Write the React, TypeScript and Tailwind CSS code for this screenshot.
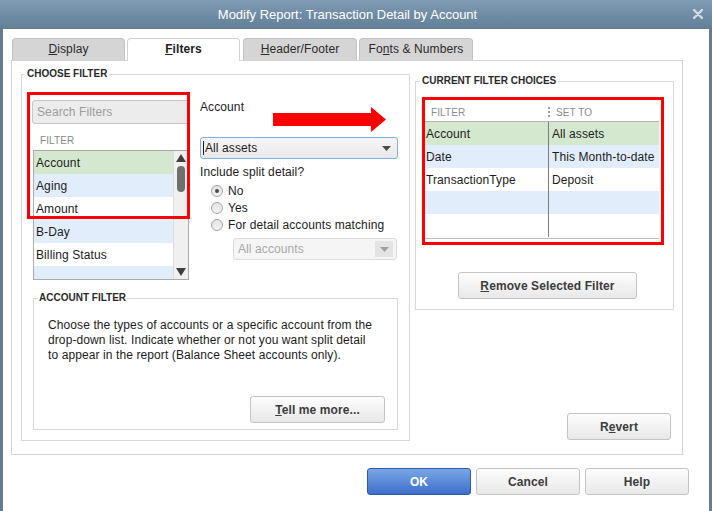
import React from 'react';

const filterRows = [
  { name: 'Account', bg: 'bg-[#d4e8d0]' },
  { name: 'Aging', bg: 'bg-[#e2edfb]' },
  { name: 'Amount', bg: 'bg-white' },
  { name: 'B-Day', bg: 'bg-[#e2edfb]' },
  { name: 'Billing Status', bg: 'bg-white' },
  { name: '', bg: 'bg-[#e2edfb]' },
];

const choiceRows = [
  { filter: 'Account', setTo: 'All assets', bg: 'bg-[#d4e8d0]' },
  { filter: 'Date', setTo: 'This Month-to-date', bg: 'bg-[#e2edfb]' },
  { filter: 'TransactionType', setTo: 'Deposit', bg: 'bg-white' },
  { filter: '', setTo: '', bg: 'bg-[#e2edfb]' },
  { filter: '', setTo: '', bg: 'bg-white' },
];

function Btn({ children, className = '' }: { children: React.ReactNode; className?: string }) {
  return (
    <button
      className={`flex items-center justify-center rounded-[3px] border border-[#c4c4c4] bg-linear-to-b from-[#fdfdfd] to-[#e8e8e8] text-[12px] font-bold text-[#3c3c3c] ${className}`}
    >
      {children}
    </button>
  );
}

function Radio({ checked, label }: { checked?: boolean; label: string }) {
  return (
    <div className="flex h-[17px] items-center pl-[11px]">
      <span className="flex h-[12px] w-[12px] items-center justify-center rounded-full border border-[#a3a3a3] bg-linear-to-b from-[#e4e4e4] to-[#f4f4f4]">
        {checked && <span className="h-[4px] w-[4px] rounded-full bg-[#4a4a4a]" />}
      </span>
      <span className="ml-[5px] text-[12px] text-[#1c1c1c]">{label}</span>
    </div>
  );
}

function Caret({ color }: { color: string }) {
  return (
    <svg width="9" height="5" viewBox="0 0 9 5">
      <polygon points="0,0 9,0 4.5,5" fill={color} />
    </svg>
  );
}

export default function App() {
  return (
    <div className="relative h-[511px] w-[712px] overflow-hidden bg-white font-[Liberation_Sans,Arial,sans-serif] text-[12px] tracking-[0.1px] text-[#1c1c1c]">
      {/* title bar */}
      <div className="relative flex h-[29px] items-center justify-center bg-linear-to-b from-[#7f9bb3] to-[#627f98] pr-[17px]">
        <span className="text-[13px] tracking-normal text-white">Modify Report: Transaction Detail by Account</span>
        <svg className="absolute right-[9px] top-[9px]" width="10" height="10" viewBox="0 0 10 10">
          <path d="M1 1 L9 9 M9 1 L1 9" stroke="#d2dce5" strokeWidth="2.4" strokeLinecap="round" />
        </svg>
      </div>

      <div className="flex h-[482px]">
        <div className="w-[3px] bg-[#627c91]" />

        <div className="flex w-[706px] flex-col pl-[8px]">
          {/* tabs */}
          <div className="ml-[1px] mt-[9px] flex h-[22px] items-end">
            <div className="flex h-[22px] w-[113px] items-center justify-center rounded-t-[4px] border border-b-0 border-[#c3c3c3] bg-[#d5d5d5] pb-[1px] text-[12px] text-[#2a2a2a]">
              <span><u>D</u>isplay</span>
            </div>
            <div className="relative z-10 mb-[-1px] ml-[2px] flex h-[23px] w-[113px] items-center justify-center rounded-t-[4px] border border-b-0 border-[#d2d2d2] bg-white pb-[2px] text-[12px] font-bold text-[#1c1c1c]">
              <span><u>F</u>ilters</span>
            </div>
            <div className="ml-[3px] flex h-[22px] w-[114px] items-center justify-center rounded-t-[4px] border border-b-0 border-[#c3c3c3] bg-[#d5d5d5] pb-[1px] text-[12px] text-[#2a2a2a]">
              <span><u>H</u>eader/Footer</span>
            </div>
            <div className="ml-[2px] flex h-[22px] w-[114px] items-center justify-center rounded-t-[4px] border border-b-0 border-[#c3c3c3] bg-[#d5d5d5] pb-[1px] text-[12px] text-[#2a2a2a]">
              <span>Fo<u>n</u>ts &amp; Numbers</span>
            </div>
          </div>

          {/* main panel */}
          <div className="flex h-[395px] w-[672px] gap-[5px] border border-[#d4d4d4] pb-[13px] pl-[9px] pr-[8px] pt-[7px]">
            {/* choose filter */}
            <fieldset className="h-full w-[390px] border border-[#d8d8d8]">
              <legend className="ml-[3px] px-[2px] text-[10px] font-bold leading-[12px] tracking-normal text-[#2a2a2a]">CHOOSE FILTER</legend>
              <div className="flex pl-[10px] pt-[20px]">
                <div className="flex w-[158px] flex-col">
                  <div className="flex h-[24px] items-center rounded-[3px] border border-[#c9c9c9] bg-[#ececec] px-[4px] text-[12px] text-[#9c9c9c]">
                    Search Filters
                  </div>
                  <div className="mt-[11px] pl-[8px] text-[10px] leading-[12px] text-[#8a8a8a]">FILTER</div>
                  <div className="ml-[1px] mt-[3px] flex h-[130px] w-[156px] border border-[#ababab]">
                    <div className="flex flex-1 flex-col overflow-hidden">
                      {filterRows.map((r, i) => (
                        <div key={i} className={`flex h-[23px] shrink-0 items-center pl-[2px] ${r.bg}`}>
                          {r.name}
                        </div>
                      ))}
                    </div>
                    <div className="flex w-[15px] flex-col items-center border-l border-[#dcdcdc] bg-[#f0f0f0]">
                      <div className="mt-[3px]">
                        <svg width="10" height="8" viewBox="0 0 10 8">
                          <polygon points="5,0 10,8 0,8" fill="#3f3f3f" />
                        </svg>
                      </div>
                      <div className="mt-[4px] h-[26px] w-[8px] rounded-full bg-[#6f6f6f]" />
                      <div className="mb-[3px] mt-auto">
                        <svg width="10" height="8" viewBox="0 0 10 8">
                          <polygon points="0,0 10,0 5,8" fill="#3f3f3f" />
                        </svg>
                      </div>
                    </div>
                  </div>
                </div>

                <div className="ml-[10px] flex w-[198px] flex-col">
                  <div className="pt-[1px] leading-[12px]">Account</div>
                  <div className="mt-[24px] flex h-[22px] items-center rounded-[3px] border border-[#7fb0e4] bg-linear-to-b from-[#f6f6f6] to-[#e9e9e9] pl-[2px] pr-[6px]">
                    <span className="mr-[1px] h-[14px] w-px bg-[#1c1c1c]" />
                    <span className="flex-1">All assets</span>
                    <Caret color="#4a4a4a" />
                  </div>
                  <div className="mt-[6px] leading-[14px]">Include split detail?</div>
                  <div className="mt-[3px]">
                    <Radio checked label="No" />
                    <Radio label="Yes" />
                    <Radio label="For detail accounts matching" />
                  </div>
                  <div className="ml-[33px] mt-[5px] flex h-[22px] w-[164px] items-center rounded-[3px] border border-[#dcdcdc] bg-[#f5f5f5] pl-[4px] text-[#a8a8a8]">
                    <span className="flex-1">All accounts</span>
                    <span className="mr-[3px] flex h-[16px] w-[18px] items-center justify-center bg-[#e4e4e4]">
                      <Caret color="#a0a0a0" />
                    </span>
                  </div>
                </div>
              </div>

              {/* account filter */}
              <fieldset className="ml-[11px] mt-[12px] h-[138px] w-[365px] border border-[#d8d8d8]">
                <legend className="ml-[4px] px-[1px] text-[10px] font-bold leading-[12px] tracking-normal text-[#2a2a2a]">ACCOUNT FILTER</legend>
                <div className="whitespace-nowrap pl-[14px] pt-[14px] leading-[15px] text-[#1c1c1c]">
                  Choose the types of accounts or a specific account from the
                  <br />
                  drop-down list. Indicate whether or not you want split detail
                  <br />
                  to appear in the report (Balance Sheet accounts only).
                </div>
                <div className="mt-[33px] flex justify-end pr-[12px]">
                  <Btn className="h-[27px] w-[135px]">
                    <span><u>T</u>ell me more...</span>
                  </Btn>
                </div>
              </fieldset>
            </fieldset>

            {/* right column */}
            <div className="flex w-[259px] flex-col">
              <fieldset className="mt-[7px] w-[259px] border border-[#d8d8d8] pb-[10px]">
                <legend className="ml-[4px] px-[2px] text-[10px] font-bold leading-[12px] tracking-normal text-[#2a2a2a]">CURRENT FILTER CHOICES</legend>
                <div className="ml-[8px] mt-[16px] w-[235px] border-b border-[#bdbdbd] pb-[1px]">
                  <div className="flex h-[19px] items-center border-b border-[#b2b2b2] text-[10px] text-[#8c8c8c]">
                    <span className="w-[124px] pl-[7px]">FILTER</span>
                    <svg className="mr-[6px]" width="2" height="10" viewBox="0 0 2 10">
                      <rect x="0" y="0" width="2" height="2" fill="#9a9a9a" />
                      <rect x="0" y="4" width="2" height="2" fill="#9a9a9a" />
                      <rect x="0" y="8" width="2" height="2" fill="#9a9a9a" />
                    </svg>
                    <span>SET TO</span>
                  </div>
                  {choiceRows.map((r, i) => (
                    <div key={i} className={`flex h-[23px] items-center ${r.bg}`}>
                      <div className="flex h-full w-[125px] items-center border-r border-[#7c7c7c] pl-[2px]">{r.filter}</div>
                      <div className="pl-[3px]">{r.setTo}</div>
                    </div>
                  ))}
                </div>
                <Btn className="ml-[42px] mt-[33px] h-[27px] w-[179px]">
                  <span><u>R</u>emove Selected Filter</span>
                </Btn>
              </fieldset>
              <Btn className="mb-[1px] mr-[3px] mt-auto h-[27px] w-[104px] self-end">
                <span>R<u>e</u>vert</span>
              </Btn>
            </div>
          </div>

          {/* dialog buttons */}
          <div className="mt-[13px] flex justify-end gap-[5px] pr-[20px]">
            <button className="flex h-[27px] w-[104px] items-center justify-center rounded-[3px] border border-[#2d5aa8] bg-linear-to-b from-[#7aa6e6] to-[#3e6fc9] text-[12px] font-bold text-white">
              OK
            </button>
            <Btn className="h-[27px] w-[104px]">Cancel</Btn>
            <Btn className="h-[27px] w-[104px]">Help</Btn>
          </div>
        </div>

        <div className="w-[3px] bg-[#627c91]" />
      </div>

      {/* annotation overlays */}
      <div className="pointer-events-none absolute left-[27px] top-[92px] h-[127px] w-[163px] border-[3px] border-[#ff0000]" />
      <div className="pointer-events-none absolute left-[422px] top-[97px] h-[148px] w-[242px] border-[3px] border-[#ff0000]" />
      <svg className="pointer-events-none absolute left-[273px] top-[107px]" width="114" height="26" viewBox="0 0 114 26">
        <rect x="0" y="6" width="100" height="13" fill="#ff0000" />
        <polygon points="98,0 113,12.5 98,25" fill="#ff0000" />
      </svg>
    </div>
  );
}
